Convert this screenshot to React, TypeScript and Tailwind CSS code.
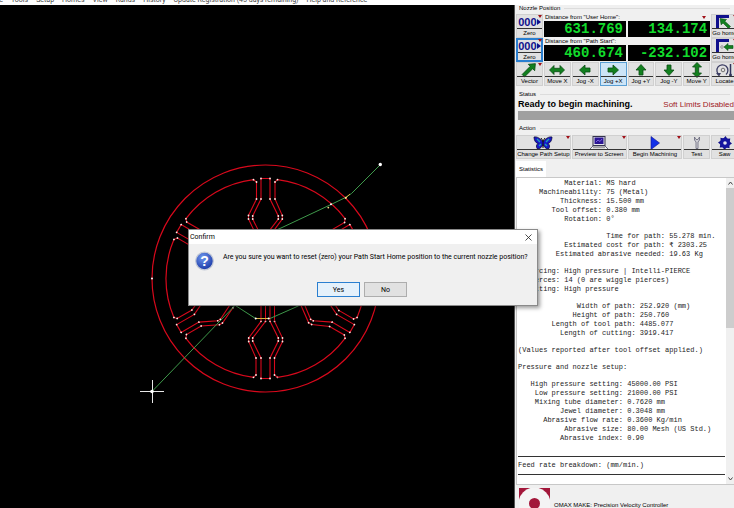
import React from 'react';
import clsx from 'clsx';

const MENU_ITEMS = [
    'File', 'Tools', 'Setup', 'Homes', 'View', 'Rands', 'History',
    'Update Registration (45 days remaining)', 'Help and Reference',
];

type ReportLine = [label: string, value: string];

type ReportGroup = {
    column: number,
    lines: ReportLine[],
}

const REPORT: ReportGroup[] = [
    {
        column: 20,
        lines: [
            ['Material:', 'MS hard'],
            ['Machineability:', '75 (Metal)'],
            ['Thickness:', '15.500 mm'],
            ['Tool offset:', '0.380 mm'],
            ['Rotation:', '0°'],
        ],
    },
    {
        column: 35,
        lines: [
            ['Time for path:', '55.278 min.'],
            ['Estimated cost for path:', '₹ 2303.25'],
            ['Estimated abrasive needed:', '19.63 Kg'],
        ],
    },
    {
        column: 10,
        lines: [
            ['Piercing:', 'High pressure | Intelli-PIERCE'],
            ['Pierces:', '14 (0 are wiggle pierces)'],
            ['Cutting:', 'High pressure'],
        ],
    },
    {
        column: 28,
        lines: [
            ['Width of path:', '252.920 (mm)'],
            ['Height of path:', '250.760'],
            ['Length of tool path:', '4485.077'],
            ['Length of cutting:', '3919.417'],
        ],
    },
    { column: 0, lines: [['(Values reported after tool offset applied.)', '']] },
    { column: 0, lines: [['Pressure and nozzle setup:', '']] },
    {
        column: 25,
        lines: [
            ['High pressure setting:', '45000.00 PSI'],
            ['Low pressure setting:', '21000.00 PSI'],
            ['Mixing tube diameter:', '0.7620 mm'],
            ['Jewel diameter:', '0.3048 mm'],
            ['Abrasive flow rate:', '0.3600 Kg/min'],
            ['Abrasive size:', '80.00 Mesh (US Std.)'],
            ['Abrasive index:', '0.90'],
        ],
    },
];

const formatGroup = ({ column, lines }: ReportGroup) =>
    lines.map(([label, value]) => `${label.padStart(column)} ${value}`).join('\n');

// One spoke of the wheel, pointing down, relative to the hub
const SPOKE_LINES: [number, number][][] = [
    [[-4.5, 42.8], [-16.8, 59.5], [-16.8, 63], [-9.5, 79.5], [-9.5, 96.5], [-12, 98.8]],
    [[0, 42.8], [-12.8, 59.5], [-12.8, 62.5], [-4.5, 79.5], [-4.5, 100], [4.5, 100], [4.5, 79.5], [12.8, 62.5], [12.8, 59.5], [4.5, 42.8]],
    [[9, 42.8], [17, 59.5], [17, 63], [9, 79.5], [9, 96.5], [12, 98.8]],
];

const Spoke = ({ angle }: { angle: number }) => (
    <g transform={`rotate(${angle})`}>
        {SPOKE_LINES.map((points, i) => (
            <polyline key={i} points={points.join(' ')} fill="none" stroke="#d8091c" strokeWidth="1.1" />
        ))}
        <path d="M-12 98.8A99.5 99.5 0 0 1 -79.6 59.8" fill="none" stroke="#d8091c" strokeWidth="1.2" />
        {SPOKE_LINES.flat().map(([x, y], i) => (
            <circle key={i} cx={x} cy={y} r="0.9" fill="#ffe9e4" />
        ))}
    </g>
);

const ToolPath = () => (
    <svg className="block" width="514" height="503" viewBox="0 5 514 503" role="img" aria-label="Tool path">
        <g transform="translate(265.5 278.5)">
            <circle r="113.5" fill="none" stroke="#d8091c" strokeWidth="1.2" />
            {[0, 60, 120, 180, 240, 300].map((angle) => <Spoke key={angle} angle={angle} />)}
            <path d="M-4.5 42.8V20M0 42.8V20M4.5 42.8V20M9 42.8V20" stroke="#d8091c" />
            <circle cx="-113.5" cy="0" r="1" fill="#fff" />
        </g>
        <g fill="none" stroke="#3f9a4b">
            <path d="M380 165L351.500 193.500L345.500 197.500L331 204.500L281 228L240 246" />
            <path d="M152 391.500L233 307.500L250 288" />
            <path d="M230 302L255.500 318.500H270L296 307L310 300" />
        </g>
        <path d="M255.500 318.500H269.500M345 198.500L350 194" fill="none" stroke="#d9b13c" />
        <g fill="#fff">
            <circle cx="380.300" cy="164.500" r="1.700" />
            <circle cx="331" cy="204.300" r="1" />
            <circle cx="345.800" cy="197.800" r="1.100" fill="#ffd98a" />
            <circle cx="328.300" cy="207.600" r="0.900" fill="#ffd98a" />
            <circle cx="255.700" cy="318.400" r="1" />
            <circle cx="268.600" cy="318.600" r="1" />
        </g>
        <path d="M140 391.500H164M152.500 380V403" stroke="#e8e8e8" />
        <circle cx="152" cy="391.500" r="1.800" fill="#fff" />
    </svg>
);

const ARROWS = {
    short: 'M0 -5.500L5 0H2V5H-2V0H-5Z',
    long: 'M0 -9L4.500 -3.500H1.700V8H-1.700V-3.500H-4.500Z',
    double: 'M0 -7.500L4.500 -3H1.700V3H4.500L0 7.500L-4.500 3H-1.700V-3H-4.500Z',
};

const ArrowIcon = ({ angle, shape = 'short' }: { angle: number, shape?: keyof typeof ARROWS }) => (
    <svg width="20" height="16" viewBox="-10 -8 20 16">
        <path
            d={ARROWS[shape]}
            transform={`rotate(${angle})`}
            fill="#12801f"
            stroke="#0b4d14"
            strokeWidth="0.8"
        />
    </svg>
);

const HomeIcon = ({ path = false }: { path?: boolean }) => (
    <svg width="24" height="16" viewBox="0 0 24 16">
        <path d="M4.500 14V2.500H16" fill="none" stroke="#10108c" strokeWidth="3" />
        {path ? (
            <>
                <path d="M11 9L15 5.500V7.500H20V10.500H15V12.500Z" fill="#12801f" stroke="#0b4d14" strokeWidth="0.6" />
                <circle cx="9" cy="9" r="1.300" fill="none" stroke="#777" strokeWidth="0.7" />
            </>
        ) : (
            <path d="M7 4.500L13.500 5.500L11.800 7.200L17.500 12.500L15.500 14.500L10 9L8.200 10.800Z" fill="#12801f" stroke="#0b4d14" strokeWidth="0.6" />
        )}
    </svg>
);

const LocateIcon = () => (
    <svg width="24" height="16" viewBox="0 0 24 16">
        <path d="M6.500 13A5.500 5.500 0 1 1 13 12.500" fill="none" stroke="#3b3d63" strokeWidth="1.300" />
        <path d="M3 11L8 11L6 14.500Z" fill="#3b3d63" />
        <circle cx="10" cy="8" r="1.800" fill="none" stroke="#555" strokeWidth="0.8" />
        <path d="M17.500 2V12" stroke="#32345c" strokeWidth="1.500" />
        <circle cx="17.500" cy="13" r="1.500" fill="#32345c" />
    </svg>
);

const ZeroIcon = () => (
    <span className="flex items-center font-bold text-[11px] leading-4 text-[#10108c]">
        000
        <svg width="4" height="8" viewBox="0 0 4 8"><path d="M0 1L4 4L0 7Z" fill="#10108c" /></svg>
    </span>
);

const ButterflyIcon = () => (
    <svg width="20" height="14" viewBox="0 0 20 14">
        <path d="M10 6C7 2 4 0.500 1 1C1 4 2.500 7 5 7.500C3 9 3 11 4.500 13C7 13 9 11 10 8.500C11 11 13 13 15.500 13C17 11 17 9 15 7.500C17.500 7 19 4 19 1C16 0.500 13 2 10 6Z" fill="#1717c9" stroke="#0a0a3c" strokeWidth="0.8" />
        <path d="M4 3L7 6M16 3L13 6M6 10L8 8M14 10L12 8" stroke="#1fa3b0" strokeWidth="1.400" />
        <path d="M10 5V12M10 5L8 2M10 5L12 2" stroke="#111" strokeWidth="1" fill="none" />
    </svg>
);

const LaptopIcon = () => (
    <svg width="20" height="14" viewBox="0 0 20 14">
        <rect x="4" y="0.500" width="12" height="9" fill="#e6e6ea" stroke="#33334d" />
        <rect x="5.500" y="1.500" width="9" height="6.500" fill="#2a1494" />
        <path d="M7 6L9 4L11 5.500L13 3" stroke="#7d63e0" fill="none" />
        <path d="M4 10H16L19.500 13.500H0.500Z" fill="#eee" stroke="#44445a" strokeWidth="0.8" />
        <path d="M4 11.700H16" stroke="#777" strokeWidth="0.8" />
    </svg>
);

const PlayIcon = () => (
    <svg width="10" height="14" viewBox="0 0 10 14"><path d="M1 0.500L9.500 7L1 13.500Z" fill="#1230e8" stroke="#10108c" strokeWidth="0.6" /></svg>
);

const WrenchIcon = () => (
    <svg width="8" height="14" viewBox="0 0 8 14">
        <path d="M1.500 1V4L3 6V12.500H5V6L6.500 4V1L5 3.500H3Z" fill="#d2d2d8" stroke="#66667a" strokeWidth="0.8" />
    </svg>
);

const SawIcon = () => (
    <svg width="14" height="14" viewBox="-7 -7 14 14">
        {[0, 45, 90, 135, 180, 225, 270, 315].map((angle) => (
            <path key={angle} d="M-2 -4L0.500 -7L2.500 -4Z" transform={`rotate(${angle})`} fill="#10108c" />
        ))}
        <circle r="5" fill="#1515a0" />
        <circle r="1.800" fill="#e4e4ee" />
    </svg>
);

const MenuMark = ({ className }: { className?: string }) => (
    <svg className={className} width="4" height="3" viewBox="0 0 4 3"><path d="M0 0H4L2 3Z" fill="#a01018" /></svg>
);

type ToolButtonProps = {
    label: string,
    icon: React.ReactNode,
    hasMenu?: boolean,
    isActive?: boolean,
    isFocused?: boolean,
    className?: string,
}

const ToolButton = ({ label, icon, hasMenu = false, isActive = false, isFocused = false, className }: ToolButtonProps) => (
    <button
        type="button"
        className={clsx(
            'relative flex min-w-0 flex-col items-center border',
            isActive ? 'border-[#5a9fd4] bg-[#cce4f7]' : 'bg-[#e1e1e1]',
            !isActive && (isFocused ? 'border-[#2a7fd0] outline outline-[#2a7fd0] -outline-offset-2' : 'border-[#d0d0d0]'),
            className,
        )}
    >
        <span className="flex min-h-0 flex-1 items-center justify-center">{icon}</span>
        <span className="w-full border-t border-[#333] text-center whitespace-nowrap">
            <span className="-mx-2 block">{label}</span>
        </span>
        {hasMenu && <MenuMark className="absolute top-0 right-0" />}
    </button>
);

const GroupTitle = ({ children }: { children: React.ReactNode }) => (
    <h2 className="flex items-center gap-1 pr-1 pl-[3px] leading-[7px]">
        {children}
        <span className="h-px flex-1 bg-[#dcdcdc]" />
    </h2>
);

const Readout = ({ id, label, x, y, hasMenu = false }: { id: string, label: string, x: string, y: string, hasMenu?: boolean }) => (
    <div className="col-span-6 flex flex-col justify-end pb-px">
        <div className="flex items-center justify-between px-px pr-1">
            <label htmlFor={id}>{label}</label>
            {hasMenu && <MenuMark />}
        </div>
        <div className="grid grid-cols-2 gap-[2px] font-['Liberation_Mono',monospace] text-sm leading-4 font-bold text-[#12dc2c]">
            <output id={id} className="bg-black pr-[3px] text-right">{x}</output>
            <output className="bg-black pr-[3px] text-right">{y}</output>
        </div>
    </div>
);

const ConfirmDialog = () => (
    <div
        role="dialog"
        aria-labelledby="confirm-title"
        className="absolute top-[229px] left-[188px] flex w-[350px] flex-col border border-[#8a8a8a] bg-[#f0f0f0] font-['Roboto',sans-serif] text-[7px] leading-3 text-black shadow-[2px_2px_4px_rgba(0,0,0,0.4)]"
    >
        <div className="flex h-[14px] items-center justify-between bg-white pr-[5px] pl-px">
            <h1 id="confirm-title">Confirm</h1>
            <button type="button" aria-label="Close">
                <svg width="7" height="7" viewBox="0 0 7 7"><path d="M0.500 0.500L6.500 6.500M6.500 0.500L0.500 6.500" stroke="#222" strokeWidth="0.8" /></svg>
            </button>
        </div>
        <div className="flex gap-[9px] px-[6px] pt-[7px]">
            <svg width="19" height="20" viewBox="0 0 19 20" className="shrink-0">
                <defs>
                    <radialGradient id="question" cx="0.4" cy="0.3" r="0.7">
                        <stop offset="0" stopColor="#6f97ee" />
                        <stop offset="1" stopColor="#1b3aa8" />
                    </radialGradient>
                </defs>
                <circle cx="9.500" cy="10" r="8.800" fill="url(#question)" stroke="#c3c9d6" strokeWidth="1.200" />
                <text x="9.500" y="15" textAnchor="middle" fontFamily="Liberation Sans" fontWeight="700" fontSize="14" fill="#fff">?</text>
            </svg>
            <p className="whitespace-nowrap">
                Are you sure you want to reset (zero) your Path Start Home position to the current nozzle position?
            </p>
        </div>
        <div className="flex justify-center gap-1 pt-[11px] pr-[2px] pb-2">
            <button type="button" className="h-[15px] w-[43px] border border-[#2a7fd0] bg-[#e5f1fb]">Yes</button>
            <button type="button" className="h-[15px] w-[43px] border border-[#adadad] bg-[#e1e1e1]">No</button>
        </div>
    </div>
);

const ControlPanel = () => (
    <aside className="flex w-[220px] shrink-0 flex-col overflow-hidden border-l border-[#555] bg-[#f0f0f0] pl-px">
        <GroupTitle>Nozzle Position</GroupTitle>
        <div className="mt-[2px] grid w-[222px] auto-rows-[24px] grid-cols-8 gap-x-px">
            <ToolButton label="Zero" icon={<ZeroIcon />} hasMenu />
            <Readout id="user-home" label={'Distance from "User Home":'} x="631.769" y="134.174" hasMenu />
            <ToolButton label="Go home" icon={<HomeIcon />} hasMenu />
            <ToolButton label="Zero" icon={<ZeroIcon />} hasMenu isFocused />
            <Readout id="path-start" label={'Distance from "Path Start":'} x="460.674" y="-232.102" />
            <ToolButton label="Go home" icon={<HomeIcon path />} hasMenu />
            <ToolButton label="Vector" icon={<ArrowIcon angle={45} shape="long" />} hasMenu />
            <ToolButton label="Move X" icon={<ArrowIcon angle={90} shape="double" />} />
            <ToolButton label="Jog -X" icon={<ArrowIcon angle={270} />} />
            <ToolButton label="Jog +X" icon={<ArrowIcon angle={90} />} isActive />
            <ToolButton label="Jog +Y" icon={<ArrowIcon angle={0} />} />
            <ToolButton label="Jog -Y" icon={<ArrowIcon angle={180} />} />
            <ToolButton label="Move Y" icon={<ArrowIcon angle={0} shape="double" />} />
            <ToolButton label="Locate" icon={<LocateIcon />} hasMenu />
        </div>

        <div className="mt-[5px]">
            <GroupTitle>Status</GroupTitle>
        </div>
        <div className="flex items-center justify-between pl-[2px] leading-[13px] whitespace-nowrap">
            <strong className="text-[9px]">Ready to begin machining.</strong>
            <span className="text-[8px] text-[#a02024]">Soft Limits Disabled</span>
        </div>
        <div className="ml-[2px] h-[9px] shrink-0 bg-[#a0a0a0]" />

        <div className="mt-[5px]">
            <GroupTitle>Action</GroupTitle>
        </div>
        <div className="mt-[3px] grid w-[222px] auto-rows-[24px] grid-cols-8 gap-x-px">
            <ToolButton className="col-span-2" label="Change Path Setup" icon={<ButterflyIcon />} hasMenu />
            <ToolButton className="col-span-2" label="Preview to Screen" icon={<LaptopIcon />} hasMenu />
            <ToolButton className="col-span-2" label="Begin Machining" icon={<PlayIcon />} hasMenu />
            <ToolButton label="Test" icon={<WrenchIcon />} />
            <ToolButton label="Saw" icon={<SawIcon />} />
        </div>

        <div role="tablist" className="mt-[2px] flex">
            <button type="button" role="tab" aria-selected className="h-4 bg-white px-[3px]">Statistics</button>
        </div>
        <div className="flex min-h-0 flex-1 border border-r-0 border-[#c8c8c8] bg-white">
            <div className="flex min-w-0 flex-1 flex-col gap-2 overflow-hidden pt-px pl-px font-['Liberation_Mono',monospace] text-[7px] leading-[9px] text-[#1c1c1c]">
                {REPORT.map((group) => (
                    <pre key={group.lines[0][0]} className="font-[inherit]">{formatGroup(group)}</pre>
                ))}
                <pre className="mt-[5px] mr-px border-y border-[#333] py-1 font-[inherit]">Feed rate breakdown: (mm/min.)</pre>
            </div>
            <div className="flex w-2 flex-col items-center bg-[#f0f0f0]">
                <svg className="my-[3px] shrink-0" width="5" height="4" viewBox="0 0 5 4"><path d="M0.500 3.500L2.500 1L4.500 3.500" fill="none" stroke="#444" /></svg>
                <div className="h-[140px] w-full bg-[#cdcdcd]" />
                <svg className="mt-auto mb-[3px] shrink-0" width="5" height="4" viewBox="0 0 5 4"><path d="M0.500 0.500L2.500 3L4.500 0.500" fill="none" stroke="#444" /></svg>
            </div>
        </div>
        <footer className="flex h-[23px] shrink-0 gap-1 overflow-hidden pt-[3px] pl-[3px]">
            <svg className="shrink-0" width="31" height="31" viewBox="0 0 31 31">
                <rect width="31" height="31" fill="#a3173a" />
                <circle cx="15.500" cy="15.500" r="16" fill="#f4f4f4" />
                <circle cx="15.500" cy="15.500" r="5.500" fill="#a3173a" />
            </svg>
            <p className="pt-[13px] whitespace-nowrap">OMAX MAKE: Precision Velocity Controller</p>
        </footer>
    </aside>
);

const App = () => (
    <div className="relative flex h-screen flex-col overflow-hidden bg-white font-['Liberation_Sans',sans-serif] text-[6px] leading-[8px] text-black">
        <nav className="flex h-[5px] shrink-0 items-end gap-2 overflow-hidden pb-px font-['Roboto',sans-serif] text-[7px] whitespace-nowrap text-[#444]">
            {MENU_ITEMS.map((item) => (
                <a key={item} href="#" className="first:-ml-2">{item}</a>
            ))}
        </nav>
        <div className="flex min-h-0 flex-1">
            <main className="min-w-0 flex-1 overflow-hidden bg-black">
                <ToolPath />
            </main>
            <ControlPanel />
        </div>
        <ConfirmDialog />
    </div>
);

export default App;
